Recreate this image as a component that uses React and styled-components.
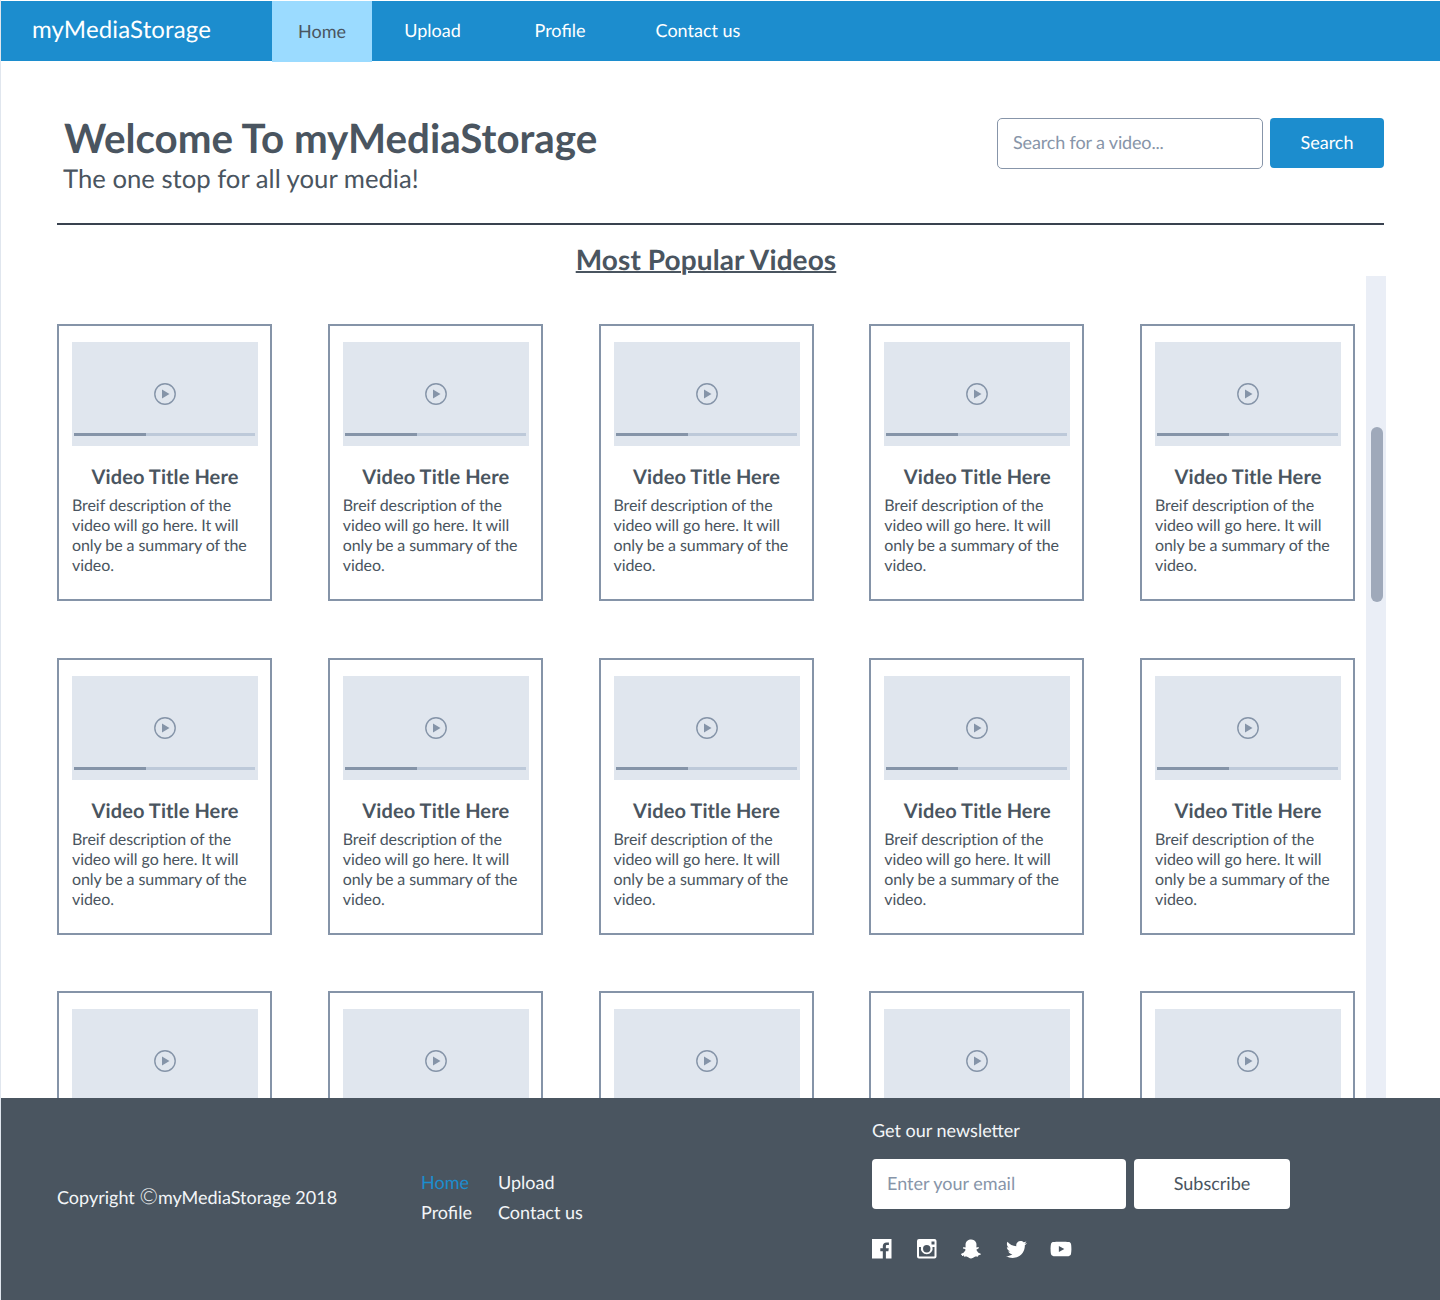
import React from "react";
import styled, { createGlobalStyle } from "styled-components";
import { FaSnapchatGhost, FaTwitter, FaYoutube } from "react-icons/fa";

const videos = Array.from({ length: 15 }, (_, i) => i);
const navLinks = ["Home", "Upload", "Profile", "Contact us"];

const Play = () => (
  <svg width="24" height="24" viewBox="0 0 24 24">
    <circle cx="12" cy="12" r="10.2" fill="none" stroke="#8594a8" strokeWidth="1.4" />
    <path d="M9 7.500v9l7.500-4.500z" fill="#8594a8" />
  </svg>
);

const FacebookIcon = () => (
  <svg width="20" height="20" viewBox="0 0 20 20">
    <path
      fill="#fff"
      d="M0 0h19.500v19.500h-5.600v-7.300h2.500l.4-2.900h-2.900V7.500c0-.9.3-1.400 1.400-1.400h1.600V3.500c-.3 0-1.200-.1-2.300-.1-2.300 0-3.800 1.400-3.800 3.900v2h-2.500v2.900h2.500v7.300H0z"
    />
  </svg>
);

const InstagramIcon = () => (
  <svg width="20" height="20" viewBox="0 0 20 20">
    <path
      fill="#fff"
      fillRule="evenodd"
      d="M2 0h15.500a2 2 0 0 1 2 2v15.500a2 2 0 0 1-2 2H2a2 2 0 0 1-2-2V2a2 2 0 0 1 2-2zm12.500 2.500v3h3v-3zM2 8v9a.6.6 0 0 0 .6.6h14.300a.6.6 0 0 0 .6-.6V8h-2a5.900 5.900 0 1 1-11.500 0zm7.750-1.900a3.700 3.700 0 1 0 0 7.400 3.700 3.700 0 0 0 0-7.400z"
    />
  </svg>
);

export default function App() {
  return (
    <Page>
      <GlobalStyle />
      <NavBar>
        <Logo>myMediaStorage</Logo>
        <NavLink $active $width={100}>Home</NavLink>
        <NavLink $width={121}>Upload</NavLink>
        <NavLink $width={134}>Profile</NavLink>
        <NavLink $width={142}>Contact us</NavLink>
      </NavBar>
      <Main>
        <Header>
          <Intro>
            <Heading>Welcome To myMediaStorage</Heading>
            <Tagline>The one stop for all your media!</Tagline>
          </Intro>
          <SearchForm>
            <SearchInput placeholder="Search for a video..." />
            <SearchButton>Search</SearchButton>
          </SearchForm>
        </Header>
        <Rule />
        <SectionTitle>Most Popular Videos</SectionTitle>
        <Shelf>
          <VideoGrid>
            {videos.map((v) => (
              <Card key={v}>
                <Media>
                  <Play />
                  <Progress>
                    <ProgressFill />
                  </Progress>
                </Media>
                <CardTitle>Video Title Here</CardTitle>
                <CardText>
                  Breif description of the video will go here. It will only be a
                  summary of the video.
                </CardText>
              </Card>
            ))}
          </VideoGrid>
          <Track>
            <Thumb />
          </Track>
        </Shelf>
      </Main>
      <Footer>
        <Copyright>Copyright <CopySign>©</CopySign>myMediaStorage 2018</Copyright>
        <FooterLinks>
          {navLinks.map((l, i) => (
            <FooterLink key={l} $active={i === 0}>{l}</FooterLink>
          ))}
        </FooterLinks>
        <Newsletter>
          <NewsTitle>Get our newsletter</NewsTitle>
          <NewsForm>
            <EmailInput placeholder="Enter your email" />
            <SubscribeButton>Subscribe</SubscribeButton>
          </NewsForm>
          <Socials>
            <FacebookIcon />
            <InstagramIcon />
            <FaSnapchatGhost size={20} />
            <FaTwitter size={21} />
            <FaYoutube size={22} />
          </Socials>
        </Newsletter>
      </Footer>
    </Page>
  );
}

const GlobalStyle = createGlobalStyle`
  * {
    box-sizing: border-box;
  }
  body {
    margin: 0;
    background: #fff;
    font-family: Lato, "Liberation Sans", sans-serif;
    color: #4a5560;
    text-rendering: geometricPrecision;
  }
  input, button {
    text-rendering: geometricPrecision;
  }
  input::placeholder {
    color: #8795a9;
    opacity: 1;
  }
`;

const Page = styled.div`
  width: 1440px;
  height: 1300px;
  padding: 1px 0 0 1px;
  background: #fff;
  display: flex;
  flex-direction: column;
  overflow: hidden;
  box-shadow: inset 1px 0 0 #e0e6ee;
`;
const NavBar = styled.nav`
  height: 60px;
  flex: none;
  display: flex;
  background: #1c8dce;
  color: #fff;
`;
const Logo = styled.div`
  width: 271px;
  padding-left: 31px;
  font-size: 24px;
  line-height: 57px;
  letter-spacing: 0.14px;
`;
const NavLink = styled.a`
  width: ${(p) => p.$width}px;
  height: ${(p) => (p.$active ? 61 : 60)}px;
  padding-bottom: 2px;
  display: flex;
  align-items: center;
  justify-content: center;
  font-size: 18px;
  color: ${(p) => (p.$active ? "#4a5560" : "#fff")};
  background: ${(p) => (p.$active ? "#9bdbff" : "transparent")};
`;
const Main = styled.main`
  flex: 1;
  min-height: 0;
  padding: 0 54px 0 56px;
  display: flex;
  flex-direction: column;
`;
const Header = styled.header`
  display: flex;
  justify-content: space-between;
  height: 162px;
  padding-top: 55px;
  padding-right: 2px;
`;
const Intro = styled.div`
  padding-left: 6px;
`;
const Heading = styled.h1`
  margin: 0 0 0 1px;
  font-size: 40.33px;
  font-weight: 700;
  line-height: 43px;
`;
const Tagline = styled.p`
  margin: 2px 0 0;
  font-size: 25.7px;
  line-height: 36px;
`;
const SearchForm = styled.form`
  display: flex;
  gap: 7px;
  padding-top: 2px;
`;
const SearchInput = styled.input`
  width: 266px;
  height: 51px;
  padding: 0 15px 3px;
  border: 1px solid #8795a9;
  border-radius: 5px;
  font: 18px Lato, sans-serif;
  letter-spacing: -0.15px;
  outline: none;
`;
const SearchButton = styled.button`
  width: 114px;
  height: 50px;
  padding-bottom: 3px;
  border: 0;
  border-radius: 4px;
  background: #1c8dce;
  color: #fff;
  font: 18px Lato, sans-serif;
`;
const Rule = styled.div`
  height: 2px;
  width: 1327px;
  flex: none;
  background: #39424f;
`;
const SectionTitle = styled.h2`
  margin: 0;
  width: 1298px;
  height: 51px;
  padding-top: 17px;
  text-align: center;
  font-size: 28px;
  line-height: 34px;
  font-weight: 700;
  letter-spacing: 0.1px;
  text-decoration: underline;
  text-decoration-thickness: 2px;
  flex: none;
`;
const Shelf = styled.section`
  flex: 1;
  min-height: 0;
  display: flex;
  gap: 11px;
  overflow: hidden;
`;
const VideoGrid = styled.div`
  width: 1298px;
  padding-top: 48px;
  display: grid;
  grid-template-columns: repeat(5, 215px);
  grid-auto-rows: 277px;
  column-gap: 55.75px;
  row-gap: 56.5px;
`;
const Card = styled.article`
  border: 2px solid #8594a8;
  padding: 16px 12px 0 13px;
`;
const Media = styled.div`
  position: relative;
  height: 104px;
  background: #e0e6ee;
  display: flex;
  align-items: center;
  justify-content: center;
`;
const Progress = styled.div`
  position: absolute;
  left: 2px;
  right: 3px;
  bottom: 10px;
  height: 3px;
  background: #bdc9d9;
`;
const ProgressFill = styled.div`
  width: 72px;
  height: 100%;
  background: #8594a8;
`;
const CardTitle = styled.h3`
  margin: 19px 0 0;
  text-align: center;
  font-size: 20px;
  line-height: 24px;
  font-weight: 700;
  letter-spacing: 0.1px;
`;
const CardText = styled.p`
  margin: 7px 0 0;
  font-size: 16px;
  line-height: 20px;
  letter-spacing: -0.08px;
`;
const Track = styled.div`
  width: 20px;
  flex: none;
  padding: 151px 3px 0 5px;
  background: #eaeef6;
`;
const Thumb = styled.div`
  height: 175px;
  border-radius: 6px;
  background: #9fa9ba;
`;
const Footer = styled.footer`
  height: 202px;
  flex: none;
  display: flex;
  background: #4a5560;
  color: #fff;
`;
const Copyright = styled.div`
  width: 420px;
  padding: 87px 0 0 56px;
  font-size: 18px;
  line-height: 24px;
  color: #f3f5f8;
`;
const CopySign = styled.span`
  font-size: 22px;
  font-weight: 300;
  line-height: 20px;
`;
const FooterLinks = styled.div`
  width: 451px;
  padding-top: 69px;
  display: grid;
  grid-template-columns: 77px 1fr;
  grid-auto-rows: 30px;
  font-size: 18px;
  align-content: start;
`;
const FooterLink = styled.a`
  line-height: 30px;
  color: ${(p) => (p.$active ? "#1c8dce" : "#f3f5f8")};
`;
const Newsletter = styled.div`
  padding-top: 20px;
`;
const NewsTitle = styled.div`
  font-size: 18px;
  line-height: 24px;
  color: #f3f5f8;
`;
const NewsForm = styled.form`
  margin-top: 17px;
  display: flex;
  gap: 8px;
`;
const EmailInput = styled.input`
  width: 254px;
  height: 50px;
  padding: 0 15px 3px;
  border: 0;
  border-radius: 4px;
  font: 18px Lato, sans-serif;
  outline: none;
`;
const SubscribeButton = styled.button`
  width: 156px;
  height: 50px;
  padding-bottom: 3px;
  border: 0;
  border-radius: 4px;
  background: #fff;
  color: #4a5560;
  font: 18px Lato, sans-serif;
`;
const Socials = styled.div`
  margin-top: 29px;
  display: grid;
  grid-template-columns: 45px 44px 45px 44px 22px;
  align-items: center;
  color: #fff;
`;
